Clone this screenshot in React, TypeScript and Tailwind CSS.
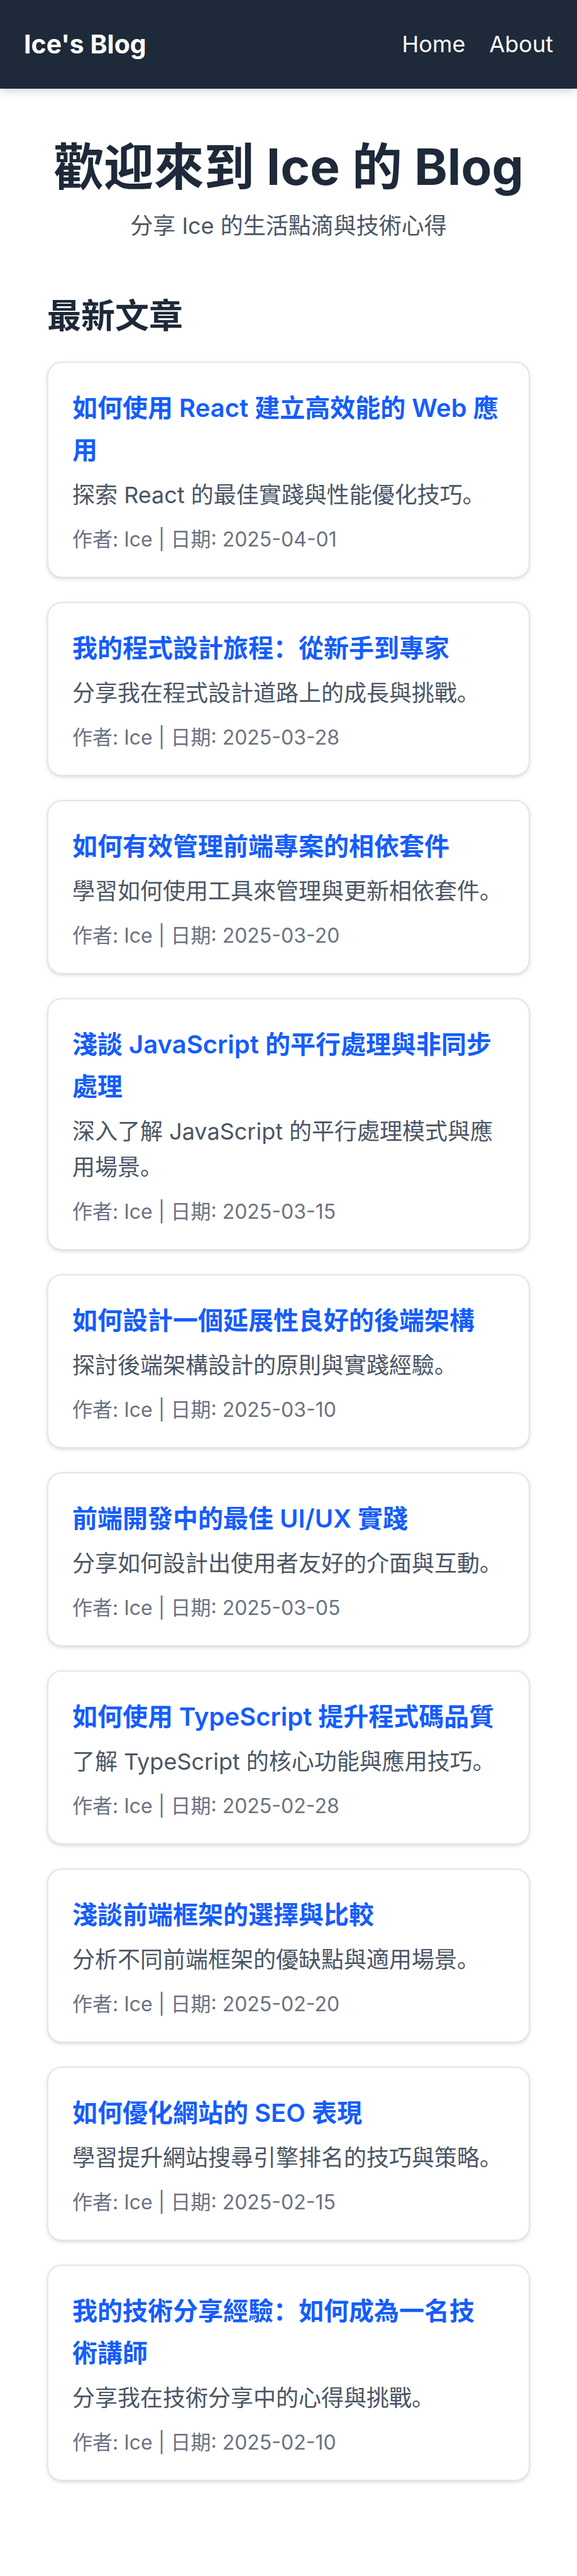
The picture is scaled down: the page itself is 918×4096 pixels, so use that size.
type Post = {
  title: string;
  titleEnd?: string;
  summary: string;
  author: string;
  date: string;
};

const posts: Post[] = [
  { title: "如何使用 React 建立高效能的 Web 應用", summary: "探索 React 的最佳實踐與性能優化技巧。", author: "Ice", date: "2025-04-01" },
  { title: "我的程式設計旅程：從新手到專家", summary: "分享我在程式設計道路上的成長與挑戰。", author: "Ice", date: "2025-03-28" },
  { title: "如何有效管理前端專案的相依套件", summary: "學習如何使用工具來管理與更新相依套件。", author: "Ice", date: "2025-03-20" },
  { title: "淺談 JavaScript 的平行處理與非同步", titleEnd: "處理", summary: "深入了解 JavaScript 的平行處理模式與應用場景。", author: "Ice", date: "2025-03-15" },
  { title: "如何設計一個延展性良好的後端架構", summary: "探討後端架構設計的原則與實踐經驗。", author: "Ice", date: "2025-03-10" },
  { title: "前端開發中的最佳 UI/UX 實踐", summary: "分享如何設計出使用者友好的介面與互動。", author: "Ice", date: "2025-03-05" },
  { title: "如何使用 TypeScript 提升程式碼品質", summary: "了解 TypeScript 的核心功能與應用技巧。", author: "Ice", date: "2025-02-28" },
  { title: "淺談前端框架的選擇與比較", summary: "分析不同前端框架的優缺點與適用場景。", author: "Ice", date: "2025-02-20" },
  { title: "如何優化網站的 SEO 表現", summary: "學習提升網站搜尋引擎排名的技巧與策略。", author: "Ice", date: "2025-02-15" },
  { title: "我的技術分享經驗：如何成為一名技", titleEnd: "術講師", summary: "分享我在技術分享中的心得與挑戰。", author: "Ice", date: "2025-02-10" },
];

function Header() {
  return (
    <header className="flex items-center justify-between bg-[#1e2939] px-[38px] py-[38px] text-white shadow-[0_9px_14px_-2px_rgba(0,0,0,0.1),0_5px_9px_-5px_rgba(0,0,0,0.1)]">
      <a href="#" className="text-[41px] leading-[65px] font-bold">
        Ice's Blog
      </a>
      <nav className="flex gap-[38px] text-[36px] leading-[57px]">
        <a href="#">Home</a>
        <a href="#about">About</a>
      </nav>
    </header>
  );
}

function PostCard({ post }: { post: Post }) {
  return (
    <article className="rounded-[23px] border-2 border-[#e5e5e5] bg-white px-[38px] pt-[38px] pb-[36px] shadow-[0_2px_7px_rgba(0,0,0,0.1),0_2px_5px_-2px_rgba(0,0,0,0.1)]">
      <h3 className="text-[40px] leading-[67px] font-semibold text-[#155dfc]">
        <a href="#">
          {post.title}
          {post.titleEnd && <span className="whitespace-nowrap">{post.titleEnd}</span>}
        </a>
      </h3>
      <p className="mt-[10px] text-[36px] leading-[57px] text-[#4a5565]">{post.summary}</p>
      <p className="mt-[18px] text-[32px] leading-[47px] text-[#6a7282]">
        作者: {post.author} | 日期: {post.date}
      </p>
    </article>
  );
}

export default function App() {
  return (
    <div
      lang="zh-Hans"
      className="min-h-screen bg-white font-['Inter','Noto_Sans_CJK_SC',sans-serif] text-[#1e2939]"
    >
      <Header />
      <main className="px-[75px] pt-[77px] pb-[75px]">
        <section className="text-center">
          <h1 className="-mx-[38px] text-[80px] leading-[94px] font-bold">歡迎來到 Ice 的 Blog</h1>
          <p className="mt-[19px] text-[36px] leading-[57px] text-[#4a5565]">分享 Ice 的生活點滴與技術心得</p>
        </section>
        <section className="mt-[77px]">
          <h2 className="text-[54px] leading-[76px] font-semibold">最新文章</h2>
          <div className="mt-[34px] flex flex-col gap-[38px]">
            {posts.map((post) => (
              <PostCard key={post.date} post={post} />
            ))}
          </div>
        </section>
      </main>
    </div>
  );
}
